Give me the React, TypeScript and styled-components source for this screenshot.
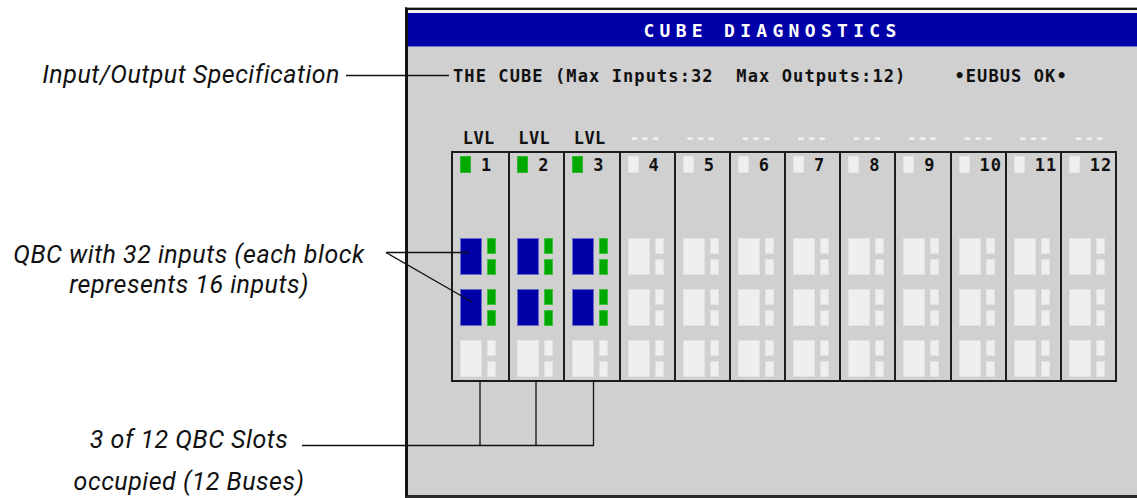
import React from 'react';
import styled, { createGlobalStyle } from 'styled-components';

const GlobalStyle = createGlobalStyle`
  body {
    margin: 0;
    background: #ffffff;
    overflow: hidden;
  }
`;

const PIXEL_FONT = `"DejaVu Sans Mono", "Liberation Mono", monospace`;

const Page = styled.div`
  position: relative;
  display: flex;
  width: 1137px;
  height: 498px;
  overflow: hidden;
`;

// left side: italic callout captions
const Notes = styled.div`
  width: 405px;
  flex: none;
  display: flex;
  flex-direction: column;
  font-family: Roboto, "Open Sans", sans-serif;
  font-style: italic;
  font-size: 25px;
  letter-spacing: 0.5px;
  color: #111;
`;

const Note = styled.div<{ $top: number; $align?: string; $lh?: number }>`
  margin-top: ${(p) => p.$top}px;
  text-align: ${(p) => p.$align || 'center'};
  line-height: ${(p) => p.$lh || 30}px;
  white-space: nowrap;
`;

const SpecNote = styled(Note)`
  padding-right: 65px;
`;

const CenterNote = styled(Note)`
  width: 378px;
`;

// right side: the diagnostics screen
const Screen = styled.div`
  flex: 1;
  margin-top: 7px;
  height: 491px;
  box-sizing: border-box;
  border-top: 1px solid #a8a8a8;
  border-left: 3px solid #141414;
  border-bottom: 3px solid #2a2a2a;
  background: #d0d0d0;
  display: flex;
  flex-direction: column;
`;

const TopRule = styled.div`
  height: 2px;
  background: #141414;
  border-bottom: 3px solid #f4f4f4;
`;

const TitleBar = styled.div`
  height: 32px;
  background: #0000a8;
  border-bottom: 1px solid #7a7ad0;
  display: flex;
  align-items: center;
  justify-content: center;
  color: #ffffff;
  font-family: ${PIXEL_FONT};
  font-weight: bold;
  font-size: 18px;
  letter-spacing: 5.3px;
  padding-top: 1px;
`;

const InfoLine = styled.div`
  margin: 19px 0 0 45px;
  height: 20px;
  display: flex;
  align-items: center;
  font-family: ${PIXEL_FONT};
  font-weight: bold;
  font-size: 17px;
  letter-spacing: 1.1px;
  color: #111;
  white-space: pre;
`;

const Status = styled.span`
  margin-left: 48px;
`;

const LevelRow = styled.div`
  margin: 42px 0 3px 43px;
  width: 666px;
  height: 20px;
  display: grid;
  grid-template-columns: repeat(12, 1fr);
  font-family: ${PIXEL_FONT};
  font-weight: bold;
  font-size: 17px;
  letter-spacing: 0.5px;
`;

const Level = styled.div<{ $used: boolean }>`
  text-align: center;
  line-height: 20px;
  color: ${(p) => (p.$used ? '#111' : '#f0f0f0')};
`;

const Rack = styled.div`
  margin-left: 43px;
  width: 666px;
  height: 231px;
  box-sizing: border-box;
  border: 2px solid #1c1c1c;
  display: grid;
  grid-template-columns: repeat(12, 1fr);
`;

const Slot = styled.div`
  display: flex;
  flex-direction: column;
  padding: 3px 0 0 7px;
  & + & {
    border-left: 2px solid #1c1c1c;
  }
`;

const SlotHead = styled.div`
  display: flex;
  align-items: center;
  height: 17px;
`;

const Lamp = styled.div<{ $on: boolean }>`
  width: 11px;
  height: 17px;
  box-sizing: border-box;
  background: ${(p) => (p.$on ? '#00a800' : '#efefef')};
  border: 1px solid ${(p) => (p.$on ? '#30b830' : '#e4e4e4')};
`;

const SlotNum = styled.span`
  margin-left: 10px;
  font-family: ${PIXEL_FONT};
  font-weight: bold;
  font-size: 17px;
  letter-spacing: 1px;
  color: #111;
`;

const Modules = styled.div`
  margin-top: 65px;
  display: flex;
  flex-direction: column;
  gap: 14px;
`;

const Module = styled.div`
  display: flex;
  gap: 5px;
`;

const Block = styled.div<{ $on: boolean }>`
  width: 22px;
  height: 37px;
  box-sizing: border-box;
  background: ${(p) => (p.$on ? '#0000a8' : '#efefef')};
  border: 1px solid ${(p) => (p.$on ? '#6a6ac8' : '#e2e2e2')};
`;

const PortStack = styled.div`
  display: flex;
  flex-direction: column;
  gap: 5px;
`;

const Port = styled.div<{ $on: boolean }>`
  width: 9px;
  height: 16px;
  box-sizing: border-box;
  background: ${(p) => (p.$on ? '#00a800' : '#efefef')};
  border: 1px solid ${(p) => (p.$on ? '#40c040' : '#e2e2e2')};
`;

const Leaders = styled.svg`
  position: absolute;
  left: 0;
  top: 0;
  pointer-events: none;
`;

const slots = Array.from({ length: 12 }, (_, i) => i + 1);
const occupied = 3;

export default function App() {
  return (
    <>
      <GlobalStyle />
      <Page>
        <Notes>
          <SpecNote $top={60} $align="right">
            Input/Output Specification
          </SpecNote>
          <CenterNote $top={150}>
            QBC with 32 inputs (each block
            <br />
            represents 16 inputs)
          </CenterNote>
          <CenterNote $top={119} $lh={42}>
            3 of 12 QBC Slots
            <br />
            occupied (12 Buses)
          </CenterNote>
        </Notes>

        <Screen>
          <TopRule />
          <TitleBar>CUBE DIAGNOSTICS</TitleBar>
          <InfoLine>
            THE CUBE (Max Inputs:32  Max Outputs:12)
            <Status>{'\u2022'}EUBUS OK{'\u2022'}</Status>
          </InfoLine>

          <LevelRow>
            {slots.map((n) => (
              <Level key={n} $used={n <= occupied}>
                {n <= occupied ? 'LVL' : '---'}
              </Level>
            ))}
          </LevelRow>

          <Rack>
            {slots.map((n) => {
              const on = n <= occupied;
              return (
                <Slot key={n}>
                  <SlotHead>
                    <Lamp $on={on} />
                    <SlotNum>{n}</SlotNum>
                  </SlotHead>
                  <Modules>
                    {[0, 1, 2].map((row) => {
                      const lit = on && row < 2;
                      return (
                        <Module key={row}>
                          <Block $on={lit} />
                          <PortStack>
                            <Port $on={lit} />
                            <Port $on={lit} />
                          </PortStack>
                        </Module>
                      );
                    })}
                  </Modules>
                </Slot>
              );
            })}
          </Rack>
        </Screen>

        <Leaders width="1137" height="498" viewBox="0 0 1137 498">
          <g stroke="#111" strokeWidth="1.3" fill="none">
            <line x1="346" y1="75.5" x2="449" y2="75.5" />
            <line x1="386" y1="252.5" x2="469" y2="252.5" />
            <line x1="386" y1="252.5" x2="472" y2="302" />
            <line x1="302" y1="445.5" x2="594" y2="445.5" />
            <line x1="480" y1="381" x2="480" y2="445.5" />
            <line x1="536" y1="381" x2="536" y2="445.5" />
            <line x1="593.5" y1="381" x2="593.5" y2="445.5" />
          </g>
        </Leaders>
      </Page>
    </>
  );
}
